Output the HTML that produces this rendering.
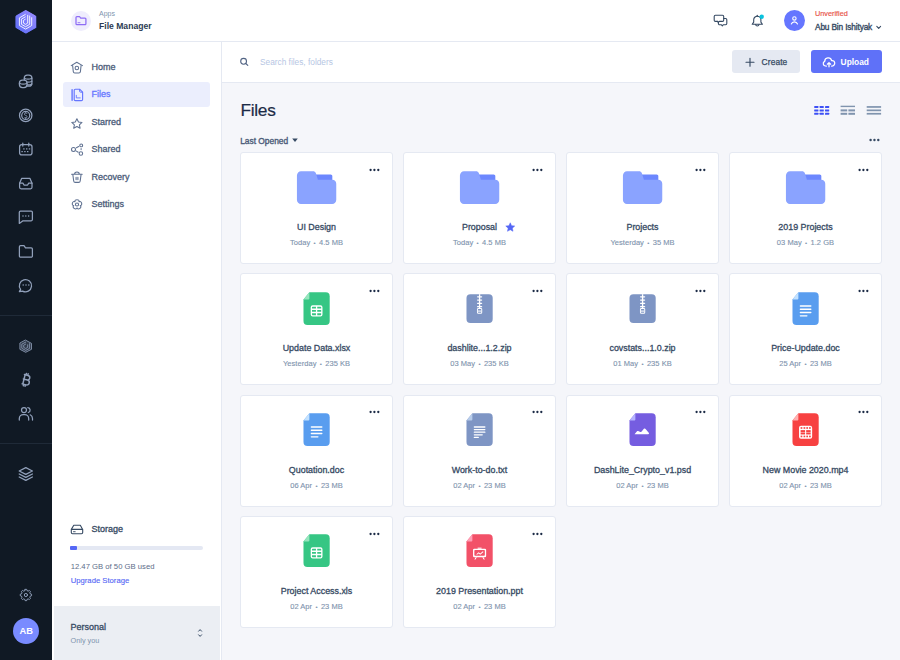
<!DOCTYPE html>
<html><head><meta charset="utf-8">
<style>
*{box-sizing:border-box;margin:0;padding:0}
html,body{width:900px;height:660px;overflow:hidden}
body{position:relative;background:#f5f6fa;font-family:"Liberation Sans",sans-serif;color:#526484}
.a{position:absolute;white-space:nowrap}
.dark{position:absolute;left:0;top:0;width:52px;height:660px;background:#101924}
.dark .hr{position:absolute;left:0;width:52px;height:1px;background:#1f2a38}
.ico{position:absolute;left:19px;width:14px;height:14px}
.ico svg{display:block;width:14px;height:14px}
.hdr{position:absolute;left:52px;top:0;width:848px;height:42px;background:#fff;border-bottom:1px solid #e5e9f2}
.aside{position:absolute;left:52px;top:42px;width:170px;height:618px;background:#fff;border-right:1px solid #e5e9f2}
.sbar{position:absolute;left:222px;top:42px;width:678px;height:41px;background:#fff;border-bottom:1px solid #e5e9f2}
.nav{font-size:9px;color:#364a63;line-height:10px;-webkit-text-stroke:0.3px currentColor}
.card{position:absolute;width:153px;height:112px;background:#fff;border:1px solid #e5e9f2;border-radius:3px}
.card svg.fi{position:absolute;left:51.6px;top:10.6px;width:47.2px;height:47.2px}
.card .dots{position:absolute;left:127.5px;top:15.2px;width:12px;height:4px}
.card .t{position:absolute;left:0;width:151px;top:68.5px;text-align:center;font-size:8.9px;color:#364a63;line-height:10px;-webkit-text-stroke:0.3px #364a63}
.card .m{position:absolute;left:0;width:151px;top:84.9px;text-align:center;font-size:7.5px;color:#8094ae;line-height:9px;letter-spacing:0.05px;-webkit-text-stroke:0.12px #8094ae}
.card .m b{font-weight:normal;font-size:6px;margin:0 3.3px;position:relative;top:-0.3px}
</style></head>
<body>
<!-- dark sidebar -->
<div class="dark">
  <svg style="position:absolute;left:15px;top:9.5px" width="22" height="24" viewBox="0 0 22 24">
    <polygon points="11,0.5 21.3,6.3 21.3,17.8 11,23.5 0.7,17.8 0.7,6.3" fill="#6576ff"/>
  </svg>
  <div class="hr" style="top:315px"></div>
  <div class="hr" style="top:443px"></div>
  <div style="position:absolute;left:13px;top:618px;width:26.4px;height:26.4px;border-radius:50%;background:#798bff;color:#fff;font-weight:bold;font-size:9.3px;line-height:26.4px;text-align:center">AB</div>
</div>

<!-- header -->
<div class="hdr"></div>
<div class="a" style="left:70.5px;top:10.5px;width:20.5px;height:20.5px;border-radius:50%;background:#efedfd"></div>
<div class="a" style="left:99px;top:9px;font-size:7px;line-height:9px;color:#8094ae">Apps</div>
<div class="a" style="left:99px;top:20.5px;font-size:8.6px;line-height:11px;font-weight:bold;color:#2b3b53">File Manager</div>

<div class="a" style="left:784px;top:10.4px;width:21px;height:21px;border-radius:50%;background:#6576ff"></div>
<div class="a" style="left:815px;top:9px;font-size:7.3px;line-height:9px;color:#e85347;-webkit-text-stroke:0.15px #e85347">Unverified</div>
<div class="a" style="left:815px;top:22px;font-size:8.3px;line-height:11px;color:#364a63;letter-spacing:-0.15px;-webkit-text-stroke:0.35px #364a63">Abu Bin Ishityak</div>

<!-- aside -->
<div class="aside"></div>
<div class="a" style="left:63.4px;top:82px;width:147px;height:25px;background:#ebeefd;border-radius:3px"></div>
<div class="a nav" style="left:91.6px;top:61.7px;color:#4a5b78">Home</div>
<div class="a nav" style="left:91.6px;top:89.2px;color:#6576ff">Files</div>
<div class="a nav" style="left:91.6px;top:116.8px;color:#4a5b78">Starred</div>
<div class="a nav" style="left:91.6px;top:144.3px;color:#4a5b78">Shared</div>
<div class="a nav" style="left:91.6px;top:171.9px;color:#4a5b78">Recovery</div>
<div class="a nav" style="left:91.6px;top:199.4px;color:#4a5b78">Settings</div>

<div class="a nav" style="left:91.6px;top:524.4px">Storage</div>
<div class="a" style="left:70.3px;top:546px;width:132.8px;height:4px;border-radius:2px;background:#e4e8f3"></div>
<div class="a" style="left:70.3px;top:546px;width:6.6px;height:4px;border-radius:1px;background:#5567f5"></div>
<div class="a" style="left:70.7px;top:561.5px;font-size:7.7px;line-height:9px;color:#5d6e8a">12.47 GB of 50 GB used</div>
<div class="a" style="left:70.7px;top:575.9px;font-size:7.7px;line-height:9px;color:#5567f5;-webkit-text-stroke:0.12px #5567f5">Upgrade Storage</div>

<div class="a" style="left:53.5px;top:605.7px;width:166.5px;height:54.3px;background:#ebeef3"></div>
<div class="a nav" style="left:70.6px;top:622px">Personal</div>
<div class="a" style="left:70.6px;top:636px;font-size:7.3px;line-height:9px;color:#8094ae">Only you</div>

<!-- search bar -->
<div class="sbar"></div>
<div class="a" style="left:260px;top:57.5px;font-size:8.3px;line-height:9px;color:#b6c6e3">Search files, folders</div>
<div class="a" style="left:732px;top:50.4px;width:68px;height:23px;border-radius:3px;background:#e5e9f2"></div>
<div class="a" style="left:761.6px;top:56.6px;font-size:8.4px;line-height:11px;color:#364a63;letter-spacing:0.1px;-webkit-text-stroke:0.25px #364a63">Create</div>
<div class="a" style="left:811px;top:50.4px;width:70.6px;height:23px;border-radius:3px;background:#5f71f8"></div>
<div class="a" style="left:840.6px;top:56.5px;font-size:8.4px;line-height:11px;font-weight:bold;color:#fff">Upload</div>

<!-- content -->
<div class="a" style="left:240.5px;top:99.5px;font-size:17.3px;line-height:20px;color:#1c2b46;letter-spacing:-0.3px;-webkit-text-stroke:0.2px #1c2b46">Files</div>
<div class="a" style="left:240.2px;top:135.9px;font-size:8.4px;line-height:10px;color:#4a5b78;-webkit-text-stroke:0.35px #4a5b78">Last Opened</div>


<!-- ICONS -->
<svg class="a" style="left:0;top:0" width="52" height="660" viewBox="0 0 52 660" fill="none" stroke="#91a0ba" stroke-width="1.25" stroke-linecap="round" stroke-linejoin="round">
  <!-- logo -->
  <defs><linearGradient id="lg" x1="0" y1="1" x2="1" y2="0"><stop offset="0" stop-color="#5a6cf6"/><stop offset="1" stop-color="#9d8dff"/></linearGradient></defs>
  <path d="M24.7,10.4 Q25.7,9.8 26.7,10.4 L35,15.2 Q35.9,15.7 35.9,16.8 V26.5 Q35.9,27.6 35,28.1 L26.7,32.9 Q25.7,33.5 24.7,32.9 L16.5,28.1 Q15.6,27.6 15.6,26.5 V16.8 Q15.6,15.7 16.5,15.2 Z" fill="url(#lg)" stroke="none"/>
  <g stroke="#fff" stroke-width="0.9" stroke-linecap="butt">
    <path d="M25.6,14.3 L19.4,17.9 V25.5 L25.6,29.1 L31.7,25.5 V17.3"/>
    <path d="M25.6,16.7 L21.4,19.1 V24.3 L25.6,26.7 L29.7,24.3 V15.6"/>
    <path d="M25.6,19.1 L23.4,20.4 V23.1 L25.6,24.4 L27.7,23.1 V14.9"/>
  </g>
  <!-- coins 81 -->
  <rect x="24.3" y="75" width="7.6" height="11.2" rx="3"/>
  <path d="M24.3,78.2 Q28.1,80.2 31.9,78.2 M24.6,81.2 Q28.1,83.2 31.9,81.2 M24.6,84 Q28.1,86 31.9,84"/>
  <rect x="19.4" y="80.2" width="7.6" height="7.4" rx="3" fill="#101924"/>
  <path d="M19.4,83.2 Q23.2,85.2 27,83.2"/>
  <!-- dollar coin 115.4 -->
  <circle cx="25.7" cy="115.4" r="6.2"/>
  <circle cx="25.7" cy="115.4" r="4"/>
  <path d="M27,113.6 Q26.6,112.9 25.7,112.9 Q24.4,112.9 24.4,114.2 Q24.4,115.2 25.7,115.4 Q27,115.6 27,116.6 Q27,117.9 25.7,117.9 Q24.8,117.9 24.4,117.2 M25.7,112 V112.9 M25.7,117.9 V118.8" stroke-width="0.8"/>
  <!-- calendar 149 -->
  <rect x="19.6" y="144.6" width="12.4" height="10.3" rx="2.2"/>
  <path d="M22.8,143.2 V146 M28.8,143.2 V146"/>
  <g fill="#91a0ba" stroke="none"><rect x="23.2" y="148.3" width="1.4" height="1.2"/><rect x="26" y="148.3" width="1.4" height="1.2"/><rect x="28.8" y="148.3" width="1.4" height="1.2"/><rect x="21.4" y="151" width="1.4" height="1.2"/><rect x="24.2" y="151" width="1.4" height="1.2"/><rect x="27" y="151" width="1.4" height="1.2"/></g>
  <!-- inbox 183.5 -->
  <path d="M19.6,183.2 L21.6,178.4 H30 L32,183.2 V187.3 A1.5,1.5 0 0 1 30.5,188.8 H21.1 A1.5,1.5 0 0 1 19.6,187.3 Z"/>
  <path d="M19.6,183.2 H22.9 L24,185 H27.6 L28.7,183.2 H32"/>
  <!-- chat square 217 -->
  <path d="M20.3,211 H31.2 A1.2,1.2 0 0 1 32.4,212.2 V219.6 A1.2,1.2 0 0 1 31.2,220.8 H23 L19.3,223.4 V212.2 A1.2,1.2 0 0 1 20.5,211 Z"/>
  <g fill="#91a0ba" stroke="none"><circle cx="23" cy="216" r="0.75"/><circle cx="25.8" cy="216" r="0.75"/><circle cx="28.6" cy="216" r="0.75"/></g>
  <!-- folder 251.4 -->
  <path d="M19.4,246.8 A1.2,1.2 0 0 1 20.6,245.6 H24 L25.5,247.8 H31.2 A1.2,1.2 0 0 1 32.4,249 V256 A1.2,1.2 0 0 1 31.2,257.2 H20.6 A1.2,1.2 0 0 1 19.4,256 Z"/>
  <!-- chat circle 285.3 -->
  <path d="M20.6,289.4 A6.1,6.1 0 1 1 22.6,291.1 L19.4,291.6 Z"/>
  <g fill="#91a0ba" stroke="none"><circle cx="23.2" cy="285" r="0.75"/><circle cx="26" cy="285" r="0.75"/><circle cx="28.8" cy="285" r="0.75"/></g>
  <!-- dashlite 346 -->
  <path d="M25.7,340 L31.6,343.3 V349.4 L25.7,352.5 L19.8,349.4 V343.3 Z" fill="#91a0ba" stroke="none" opacity="0.25"/>
  <g stroke-width="0.8">
    <path d="M25.7,340.2 L31.5,343.4 V349.3 L25.7,352.3 L19.9,349.3 V343.4 Z"/>
    <path d="M29.6,343.6 V348.4 L25.7,350.4 L21.8,348.3 V344.2 L25.7,342.1"/>
    <path d="M27.7,344.8 V347.4 L25.7,348.5 L23.7,347.4 V345.2 L25.7,344.1"/>
  </g>
  <!-- bitcoin 380 -->
  <path transform="rotate(14 25.7 379.8)" d="M23.2,375 H26.9 A2.3,2.3 0 0 1 26.9,379.6 H23.2 M23.2,379.6 H27.4 A2.5,2.5 0 0 1 27.4,384.6 H23.2 M23.9,375 V384.6 M24.8,373.4 V375 M26.6,373.4 V375 M24.8,384.6 V386.2 M26.6,384.6 V386.2" stroke-width="1.45"/>
  <!-- users 413.6 -->
  <circle cx="24" cy="410" r="2.5"/>
  <path d="M19.3,420 V418.6 A4,4 0 0 1 23.3,414.6 H24.7 A4,4 0 0 1 28.7,418.6 V420"/>
  <path d="M27.8,407.6 A2.5,2.5 0 0 1 28.3,412.5 M30.2,414.8 A4,4 0 0 1 32.5,418.4 V420"/>
  <!-- layers 474 -->
  <path d="M25.8,467.6 L32.4,471 L25.8,474.4 L19.2,471 Z"/>
  <path d="M19.2,474 L25.8,477.4 L32.4,474 M19.2,477 L25.8,480.4 L32.4,477"/>
  <!-- gear 595 -->
  <path d="M25.14,589.35 L26.66,589.35 L27.05,590.65 L28.16,591.11 L29.36,590.47 L30.43,591.54 L29.79,592.74 L30.25,593.85 L31.55,594.24 L31.55,595.76 L30.25,596.15 L29.79,597.26 L30.43,598.46 L29.36,599.53 L28.16,598.89 L27.05,599.35 L26.66,600.65 L25.14,600.65 L24.75,599.35 L23.64,598.89 L22.44,599.53 L21.37,598.46 L22.01,597.26 L21.55,596.15 L20.25,595.76 L20.25,594.24 L21.55,593.85 L22.01,592.74 L21.37,591.54 L22.44,590.47 L23.64,591.11 L24.75,590.65Z" stroke-width="1"/>
  <circle cx="25.9" cy="595" r="1.6" stroke-width="1"/>
</svg>

<!-- header icons -->
<svg class="a" style="left:52px;top:0" width="848" height="42" viewBox="52 0 848 42" fill="none" stroke="#364a63" stroke-width="1.1" stroke-linecap="round" stroke-linejoin="round">
  <path d="M76,17.4 A0.9,0.9 0 0 1 76.9,16.5 H79.5 L80.7,18.2 H85 A0.9,0.9 0 0 1 85.9,19.1 V23.8 A0.9,0.9 0 0 1 85,24.7 H76.9 A0.9,0.9 0 0 1 76,23.8 Z" stroke="#8e6df5" stroke-width="1.25"/>
  <path d="M78,22.7 H80" stroke="#8e6df5" stroke-width="0.9"/>
  <!-- chat -->
  <path d="M717.4,21.4 H715.4 A1.2,1.2 0 0 1 714.2,20.2 V16.4 A1.2,1.2 0 0 1 715.4,15.2 H722.5 A1.2,1.2 0 0 1 723.7,16.4 V20.2 A1.2,1.2 0 0 1 722.5,21.4 H719.6 A1.2,1.2 0 0 0 718.4,22.6 M717.4,21.4 L718.4,22.6"/>
  <path d="M723.8,18.5 H725.6 A1.2,1.2 0 0 1 726.8,19.7 V23.5 A1.2,1.2 0 0 1 725.6,24.7 H723.4 L722.3,25.8 L721.2,24.7 H719.6 A1.2,1.2 0 0 1 718.4,23.5 V22.6"/>
  <!-- bell -->
  <path d="M752.2,24.2 L753.7,22.1 V19.8 A3.6,3.6 0 0 1 760.9,19.8 V22.1 L762.4,24.2 Z"/>
  <path d="M755.6,24.6 A1.75,1.75 0 0 0 759,24.6"/>
  <path d="M757.3,15.2 V16.2" stroke-width="1.1"/>
  <circle cx="761.7" cy="16.7" r="2.2" fill="#09c2de" stroke="none"/>
  <!-- user -->
  <circle cx="794.4" cy="18.4" r="1.7" stroke="#fff" stroke-width="1.1"/>
  <path d="M791.3,24 A3.3,3.3 0 0 1 797.5,24" stroke="#fff" stroke-width="1.1"/>
  <!-- chevron -->
  <path d="M876.8,26.4 L878.7,28.3 L880.6,26.4" stroke-width="1.1"/>
</svg>

<!-- aside nav icons -->
<svg class="a" style="left:52px;top:42px" width="170" height="618" viewBox="52 42 170 618" fill="none" stroke="#5f7191" stroke-width="1.05" stroke-linecap="round" stroke-linejoin="round">
  <path d="M71.2,65.6 L76.8,62.3 L82.5,65.6"/>
  <path d="M72.6,65.4 L73.3,71.6 A1.5,1.5 0 0 0 74.8,72.9 H78.9 A1.5,1.5 0 0 0 80.4,71.6 L81.1,65.4"/>
  <circle cx="76.85" cy="67.9" r="1.75"/>
  <g stroke="#6576ff">
    <path d="M72.1,89.8 V100.2" stroke-width="1.4"/>
    <path d="M75.4,89.2 H79.6 L82.6,92.2 V99.4 A1.2,1.2 0 0 1 81.4,100.6 H75.4 A1.2,1.2 0 0 1 74.2,99.4 V90.4 A1.2,1.2 0 0 1 75.4,89.2 Z" stroke-width="1.15"/>
    <path d="M79.6,89.4 V91.2 A1,1 0 0 0 80.6,92.2 H82.4" stroke-width="1"/>
    <path d="M76.3,95.3 V97.9 H80.2" stroke-width="0.9"/>
  </g>
  <path d="M76.9,118.8 L78.5,122 L82,122.4 L79.4,124.8 L80.1,128.2 L76.9,126.5 L73.7,128.2 L74.4,124.8 L71.8,122.4 L75.3,122 Z"/>
  <circle cx="73.5" cy="149.4" r="2"/>
  <circle cx="81.2" cy="145.4" r="1.45"/>
  <circle cx="80.9" cy="153.5" r="1.75"/>
  <path d="M76.4,147.7 L78.6,146.5 M76.4,151.1 L78.2,152.2 M81.1,148.4 V149.6"/>
  <path d="M71.6,174.3 H82.2 M72.8,174.3 L73.7,181 A1.6,1.6 0 0 0 75.3,182.4 H78.6 A1.6,1.6 0 0 0 80.2,181 L81.1,174.3 M74.6,174.2 A2.35,2.2 0 0 1 79.3,174.2 M76.1,177.4 V179.6 M77.9,177.4 V179.6" stroke-width="1.1"/>
  <path d="M75.00,201.75 C74.10,199.00 79.90,199.00 79.00,201.75 C81.33,200.04 83.13,205.56 80.23,205.55 C82.58,207.25 77.89,210.65 77.00,207.90 C76.11,210.65 71.42,207.25 73.77,205.55 C70.87,205.56 72.67,200.04 75.00,201.75 Z"/>
  <circle cx="77" cy="204.5" r="1.6"/>
  <!-- storage drive -->
  <path d="M71.3,529.4 L73.8,525.2 H80.3 L82.7,529.4 V532.6 A1.2,1.2 0 0 1 81.5,533.8 H72.5 A1.2,1.2 0 0 1 71.3,532.6 Z M71.3,529.4 H82.7" stroke="#364a63" stroke-width="1.1"/>
  <path d="M73.5,531.7 H75.2" stroke="#364a63" stroke-width="0.9"/>
  <!-- up-down chevrons -->
  <path d="M198.6,631.2 L200.1,629.6 L201.6,631.2 M198.6,634.8 L200.1,636.4 L201.6,634.8" stroke="#364a63" stroke-width="1"/>
</svg>

<!-- search bar icons -->
<svg class="a" style="left:222px;top:42px" width="678" height="41" viewBox="222 42 678 41" fill="none" stroke="#364a63" stroke-width="1.2" stroke-linecap="round" stroke-linejoin="round">
  <circle cx="243.6" cy="61.3" r="2.9" stroke="#526484" stroke-width="1.1"/>
  <path d="M245.8,63.5 L247.8,65.4" stroke="#526484" stroke-width="1.1"/>
  <path d="M750,58.3 V66.2 M746,62.25 H754" stroke-width="1.15"/>
</svg>


<!-- content icons -->
<svg class="a" style="left:222px;top:83px" width="678" height="70" viewBox="222 83 678 70" fill="none" stroke-linecap="round" stroke-linejoin="round">
  <path d="M292.2,138.5 H297.8 L295,141.9 Z" fill="#364a63"/>
  <g fill="#3d50f5">
    <rect x="814.2" y="106" width="4.2" height="2" rx="0.4"/><rect x="819.6" y="106" width="4.2" height="2" rx="0.4"/><rect x="825" y="106" width="4.2" height="2" rx="0.4"/>
    <rect x="814.2" y="109.4" width="4.2" height="2" rx="0.4"/><rect x="819.6" y="109.4" width="4.2" height="2" rx="0.4"/><rect x="825" y="109.4" width="4.2" height="2" rx="0.4"/>
    <rect x="814.2" y="112.8" width="4.2" height="2" rx="0.4"/><rect x="819.6" y="112.8" width="4.2" height="2" rx="0.4"/><rect x="825" y="112.8" width="4.2" height="2" rx="0.4"/>
  </g>
  <g fill="#8094ae">
    <rect x="840.6" y="105.7" width="14.4" height="1.4"/>
    <rect x="840.6" y="109.4" width="6.6" height="2"/><rect x="848.4" y="109.4" width="6.6" height="2"/>
    <rect x="840.6" y="112.8" width="6.6" height="2"/><rect x="848.4" y="112.8" width="6.6" height="2"/>
    <rect x="866.7" y="106.1" width="14.4" height="1.7"/>
    <rect x="866.7" y="109.5" width="14.4" height="1.7"/>
    <rect x="866.7" y="112.9" width="14.4" height="1.7"/>
  </g>
  <g fill="#364a63"><circle cx="870.6" cy="140" r="1.2"/><circle cx="874.45" cy="140" r="1.2"/><circle cx="878.3" cy="140" r="1.2"/></g>
</svg>
<svg class="a" style="left:811px;top:50px" width="71" height="24" viewBox="811 50 71 24" fill="none" stroke="#fff" stroke-width="1.25" stroke-linecap="round" stroke-linejoin="round">
  <path d="M826.4,66 H825.6 A2.4,2.4 0 0 1 824.7,61.4 A3.5,3.5 0 0 1 831.6,60.6 A2.5,2.5 0 0 1 832.4,66 H831.6"/>
  <path d="M829,66.8 V62.6 M827.4,64.2 L829,62.6 L830.6,64.2"/>
</svg>

<div id="cards">
<div class="card" style="left:240.0px;top:152.0px"><div style="position:absolute;left:0;top:0px;width:100%;height:100%"><svg class="dots" viewBox="0 0 12 4"><circle cx="1.6" cy="2" r="1.15" fill="#1c2b46"/><circle cx="5.4" cy="2" r="1.15" fill="#1c2b46"/><circle cx="9.3" cy="2" r="1.15" fill="#1c2b46"/></svg><svg class="fi" viewBox="0 0 72 72"><path fill="#6c87fe" d="M57.5,31h-23c-1.4,0-2.5-1.1-2.5-2.5v-10c0-1.4,1.1-2.5,2.5-2.5h23c1.4,0,2.5,1.1,2.5,2.5v10C60,29.9,58.9,31,57.5,31z"/><path fill="#8aa3ff" d="M59.8,61H12.2C8.8,61,6,58,6,54.4V17.6C6,14,8.8,11,12.2,11h18.5c1.7,0,3.3,1,4.1,2.6L38,24h21.8c3.4,0,6.2,2.4,6.2,6v24.4C66,58,63.2,61,59.8,61z"/></svg></div><div class="t">UI Design</div><div class="m">Today<b>&bull;</b>4.5 MB</div></div>
<div class="card" style="left:403.0px;top:152.0px"><div style="position:absolute;left:0;top:0px;width:100%;height:100%"><svg class="dots" viewBox="0 0 12 4"><circle cx="1.6" cy="2" r="1.15" fill="#1c2b46"/><circle cx="5.4" cy="2" r="1.15" fill="#1c2b46"/><circle cx="9.3" cy="2" r="1.15" fill="#1c2b46"/></svg><svg class="fi" viewBox="0 0 72 72"><path fill="#6c87fe" d="M57.5,31h-23c-1.4,0-2.5-1.1-2.5-2.5v-10c0-1.4,1.1-2.5,2.5-2.5h23c1.4,0,2.5,1.1,2.5,2.5v10C60,29.9,58.9,31,57.5,31z"/><path fill="#8aa3ff" d="M59.8,61H12.2C8.8,61,6,58,6,54.4V17.6C6,14,8.8,11,12.2,11h18.5c1.7,0,3.3,1,4.1,2.6L38,24h21.8c3.4,0,6.2,2.4,6.2,6v24.4C66,58,63.2,61,59.8,61z"/></svg></div><div class="t">Proposal</div><svg viewBox="0 0 24 24" style="position:absolute;left:101px;top:69px;width:10.5px;height:10.5px"><path fill="#5567f5" stroke="#5567f5" stroke-width="1.2" stroke-linejoin="round" d="M12 1.8l3 6.6 7.2.8-5.4 4.9 1.5 7.1L12 17.6l-6.3 3.6 1.5-7.1-5.4-4.9 7.2-.8z"/></svg><div class="m">Today<b>&bull;</b>4.5 MB</div></div>
<div class="card" style="left:566.0px;top:152.0px"><div style="position:absolute;left:0;top:0px;width:100%;height:100%"><svg class="dots" viewBox="0 0 12 4"><circle cx="1.6" cy="2" r="1.15" fill="#1c2b46"/><circle cx="5.4" cy="2" r="1.15" fill="#1c2b46"/><circle cx="9.3" cy="2" r="1.15" fill="#1c2b46"/></svg><svg class="fi" viewBox="0 0 72 72"><path fill="#6c87fe" d="M57.5,31h-23c-1.4,0-2.5-1.1-2.5-2.5v-10c0-1.4,1.1-2.5,2.5-2.5h23c1.4,0,2.5,1.1,2.5,2.5v10C60,29.9,58.9,31,57.5,31z"/><path fill="#8aa3ff" d="M59.8,61H12.2C8.8,61,6,58,6,54.4V17.6C6,14,8.8,11,12.2,11h18.5c1.7,0,3.3,1,4.1,2.6L38,24h21.8c3.4,0,6.2,2.4,6.2,6v24.4C66,58,63.2,61,59.8,61z"/></svg></div><div class="t">Projects</div><div class="m">Yesterday<b>&bull;</b>35 MB</div></div>
<div class="card" style="left:729.0px;top:152.0px"><div style="position:absolute;left:0;top:0px;width:100%;height:100%"><svg class="dots" viewBox="0 0 12 4"><circle cx="1.6" cy="2" r="1.15" fill="#1c2b46"/><circle cx="5.4" cy="2" r="1.15" fill="#1c2b46"/><circle cx="9.3" cy="2" r="1.15" fill="#1c2b46"/></svg><svg class="fi" viewBox="0 0 72 72"><path fill="#6c87fe" d="M57.5,31h-23c-1.4,0-2.5-1.1-2.5-2.5v-10c0-1.4,1.1-2.5,2.5-2.5h23c1.4,0,2.5,1.1,2.5,2.5v10C60,29.9,58.9,31,57.5,31z"/><path fill="#8aa3ff" d="M59.8,61H12.2C8.8,61,6,58,6,54.4V17.6C6,14,8.8,11,12.2,11h18.5c1.7,0,3.3,1,4.1,2.6L38,24h21.8c3.4,0,6.2,2.4,6.2,6v24.4C66,58,63.2,61,59.8,61z"/></svg></div><div class="t">2019 Projects</div><div class="m">03 May<b>&bull;</b>1.2 GB</div></div>
<div class="card" style="left:240.0px;top:273.0px"><div style="position:absolute;left:0;top:0px;width:100%;height:100%"><svg class="dots" viewBox="0 0 12 4"><circle cx="1.6" cy="2" r="1.15" fill="#1c2b46"/><circle cx="5.4" cy="2" r="1.15" fill="#1c2b46"/><circle cx="9.3" cy="2" r="1.15" fill="#1c2b46"/></svg><svg class="fi" viewBox="0 0 72 72"><path d="M50,61H22a6,6,0,0,1-6-6V22l9-11H50a6,6,0,0,1,6,6V55A6,6,0,0,1,50,61Z" fill="#36c684"/><path d="M25,20.556A1.444,1.444,0,0,1,23.556,22H16l9-11h0Z" fill="#95e5bd"/><path fill="#fff" d="M42,31H30a3,3,0,0,0-3,3V45a3,3,0,0,0,3,3H42a3,3,0,0,0,3-3V34A3,3,0,0,0,42,31ZM29,38h6v3H29Zm8,0h6v3H37Zm6-4v2H37V33h5A1,1,0,0,1,43,34ZM30,33h5v3H29V34A1,1,0,0,1,30,33ZM29,45V43h6v3H30A1,1,0,0,1,29,45Zm13,1H37V43h6v2A1,1,0,0,1,42,46Z"/></svg></div><div class="t">Update Data.xlsx</div><div class="m">Yesterday<b>&bull;</b>235 KB</div></div>
<div class="card" style="left:403.0px;top:273.0px"><div style="position:absolute;left:0;top:0px;width:100%;height:100%"><svg class="dots" viewBox="0 0 12 4"><circle cx="1.6" cy="2" r="1.15" fill="#1c2b46"/><circle cx="5.4" cy="2" r="1.15" fill="#1c2b46"/><circle cx="9.3" cy="2" r="1.15" fill="#1c2b46"/></svg><svg class="fi" viewBox="0 0 72 72"><rect x="16" y="14" width="40" height="44" rx="6" ry="6" fill="#7e95c4"/><rect x="32" y="17" width="8" height="2" rx="1" fill="#fff"/><rect x="32" y="22" width="8" height="2" rx="1" fill="#fff"/><rect x="32" y="27" width="8" height="2" rx="1" fill="#fff"/><rect x="32" y="32" width="8" height="2" rx="1" fill="#fff"/><rect x="35" y="14" width="2" height="22" fill="#fff"/><path fill="#fff" d="M38,44H34a2,2,0,0,1-2-2V37a2,2,0,0,1,2-2h4a2,2,0,0,1,2,2v5A2,2,0,0,1,38,44Zm-4-7.2a.6.6,0,0,0-.6.6v4.2a.6.6,0,0,0,.6.6h4a.6.6,0,0,0,.6-.6V37.4a.6.6,0,0,0-.6-.6Z"/><rect x="33" y="39" width="6" height="1.6" fill="#fff"/></svg></div><div class="t">dashlite...1.2.zip</div><div class="m">03 May<b>&bull;</b>235 KB</div></div>
<div class="card" style="left:566.0px;top:273.0px"><div style="position:absolute;left:0;top:0px;width:100%;height:100%"><svg class="dots" viewBox="0 0 12 4"><circle cx="1.6" cy="2" r="1.15" fill="#1c2b46"/><circle cx="5.4" cy="2" r="1.15" fill="#1c2b46"/><circle cx="9.3" cy="2" r="1.15" fill="#1c2b46"/></svg><svg class="fi" viewBox="0 0 72 72"><rect x="16" y="14" width="40" height="44" rx="6" ry="6" fill="#7e95c4"/><rect x="32" y="17" width="8" height="2" rx="1" fill="#fff"/><rect x="32" y="22" width="8" height="2" rx="1" fill="#fff"/><rect x="32" y="27" width="8" height="2" rx="1" fill="#fff"/><rect x="32" y="32" width="8" height="2" rx="1" fill="#fff"/><rect x="35" y="14" width="2" height="22" fill="#fff"/><path fill="#fff" d="M38,44H34a2,2,0,0,1-2-2V37a2,2,0,0,1,2-2h4a2,2,0,0,1,2,2v5A2,2,0,0,1,38,44Zm-4-7.2a.6.6,0,0,0-.6.6v4.2a.6.6,0,0,0,.6.6h4a.6.6,0,0,0,.6-.6V37.4a.6.6,0,0,0-.6-.6Z"/><rect x="33" y="39" width="6" height="1.6" fill="#fff"/></svg></div><div class="t">covstats...1.0.zip</div><div class="m">01 May<b>&bull;</b>235 KB</div></div>
<div class="card" style="left:729.0px;top:273.0px"><div style="position:absolute;left:0;top:0px;width:100%;height:100%"><svg class="dots" viewBox="0 0 12 4"><circle cx="1.6" cy="2" r="1.15" fill="#1c2b46"/><circle cx="5.4" cy="2" r="1.15" fill="#1c2b46"/><circle cx="9.3" cy="2" r="1.15" fill="#1c2b46"/></svg><svg class="fi" viewBox="0 0 72 72"><path d="M50,61H22a6,6,0,0,1-6-6V22l9-11H50a6,6,0,0,1,6,6V55A6,6,0,0,1,50,61Z" fill="#599def"/><path d="M25,20.556A1.444,1.444,0,0,1,23.556,22H16l9-11h0Z" fill="#c2e1ff"/><rect x="27" y="31" width="18" height="2" rx="1" fill="#fff"/><rect x="27" y="36" width="18" height="2" rx="1" fill="#fff"/><rect x="27" y="41" width="18" height="2" rx="1" fill="#fff"/><rect x="27" y="46" width="12" height="2" rx="1" fill="#fff"/></svg></div><div class="t">Price-Update.doc</div><div class="m">25 Apr<b>&bull;</b>23 MB</div></div>
<div class="card" style="left:240.0px;top:395.0px"><div style="position:absolute;left:0;top:-0.8px;width:100%;height:100%"><svg class="dots" viewBox="0 0 12 4"><circle cx="1.6" cy="2" r="1.15" fill="#1c2b46"/><circle cx="5.4" cy="2" r="1.15" fill="#1c2b46"/><circle cx="9.3" cy="2" r="1.15" fill="#1c2b46"/></svg><svg class="fi" viewBox="0 0 72 72"><path d="M50,61H22a6,6,0,0,1-6-6V22l9-11H50a6,6,0,0,1,6,6V55A6,6,0,0,1,50,61Z" fill="#599def"/><path d="M25,20.556A1.444,1.444,0,0,1,23.556,22H16l9-11h0Z" fill="#c2e1ff"/><rect x="27" y="31" width="18" height="2" rx="1" fill="#fff"/><rect x="27" y="36" width="18" height="2" rx="1" fill="#fff"/><rect x="27" y="41" width="18" height="2" rx="1" fill="#fff"/><rect x="27" y="46" width="12" height="2" rx="1" fill="#fff"/></svg></div><div class="t">Quotation.doc</div><div class="m">06 Apr<b>&bull;</b>23 MB</div></div>
<div class="card" style="left:403.0px;top:395.0px"><div style="position:absolute;left:0;top:-0.8px;width:100%;height:100%"><svg class="dots" viewBox="0 0 12 4"><circle cx="1.6" cy="2" r="1.15" fill="#1c2b46"/><circle cx="5.4" cy="2" r="1.15" fill="#1c2b46"/><circle cx="9.3" cy="2" r="1.15" fill="#1c2b46"/></svg><svg class="fi" viewBox="0 0 72 72"><path d="M50,61H22a6,6,0,0,1-6-6V22l9-11H50a6,6,0,0,1,6,6V55A6,6,0,0,1,50,61Z" fill="#7e95c4"/><path d="M25,20.556A1.444,1.444,0,0,1,23.556,22H16l9-11h0Z" fill="#b7ccea"/><rect x="27" y="31" width="18" height="2" rx="1" fill="#fff"/><rect x="27" y="35" width="18" height="2" rx="1" fill="#fff"/><rect x="27" y="39" width="18" height="2" rx="1" fill="#fff"/><rect x="27" y="43" width="14" height="2" rx="1" fill="#fff"/><rect x="27" y="47" width="8" height="2" rx="1" fill="#fff"/></svg></div><div class="t">Work-to-do.txt</div><div class="m">02 Apr<b>&bull;</b>23 MB</div></div>
<div class="card" style="left:566.0px;top:395.0px"><div style="position:absolute;left:0;top:-0.8px;width:100%;height:100%"><svg class="dots" viewBox="0 0 12 4"><circle cx="1.6" cy="2" r="1.15" fill="#1c2b46"/><circle cx="5.4" cy="2" r="1.15" fill="#1c2b46"/><circle cx="9.3" cy="2" r="1.15" fill="#1c2b46"/></svg><svg class="fi" viewBox="0 0 72 72"><path d="M50,61H22a6,6,0,0,1-6-6V22l9-11H50a6,6,0,0,1,6,6V55A6,6,0,0,1,50,61Z" fill="#755de0"/><path d="M25,20.556A1.444,1.444,0,0,1,23.556,22H16l9-11h0Z" fill="#b5b3ff"/><path fill="#fff" d="M27.2,43H44.7s2.3-.3.7-2l-5.2-6.1s-1.4-1.5-2.5.1l-3.5,4.1a2.1,2.1,0,0,1-2.4.2l-2.6-1.2s-1-.4-1.7.4l-3.5,4.1-.1.4c-.5.4,.4,0,.3,0Z"/></svg></div><div class="t">DashLite_Crypto_v1.psd</div><div class="m">02 Apr<b>&bull;</b>23 MB</div></div>
<div class="card" style="left:729.0px;top:395.0px"><div style="position:absolute;left:0;top:-0.8px;width:100%;height:100%"><svg class="dots" viewBox="0 0 12 4"><circle cx="1.6" cy="2" r="1.15" fill="#1c2b46"/><circle cx="5.4" cy="2" r="1.15" fill="#1c2b46"/><circle cx="9.3" cy="2" r="1.15" fill="#1c2b46"/></svg><svg class="fi" viewBox="0 0 72 72"><path d="M50,61H22a6,6,0,0,1-6-6V22l9-11H50a6,6,0,0,1,6,6V55A6,6,0,0,1,50,61Z" fill="#f74141"/><path d="M25,20.556A1.444,1.444,0,0,1,23.556,22H16l9-11h0Z" fill="#ffb0b0"/><rect x="26" y="30" width="20" height="20" rx="3" fill="#fff"/><g fill="#f74141"><rect x="28.4" y="32.3" width="2.6" height="2.5"/><rect x="32.9" y="32.3" width="2.6" height="2.5"/><rect x="37.1" y="32.3" width="2.6" height="2.5"/><rect x="41.3" y="32.3" width="2.6" height="2.5"/><rect x="28.4" y="45.2" width="2.6" height="2.5"/><rect x="32.9" y="45.2" width="2.6" height="2.5"/><rect x="37.1" y="45.2" width="2.6" height="2.5"/><rect x="41.3" y="45.2" width="2.6" height="2.5"/><rect x="28.4" y="36.8" width="6.8" height="3"/><rect x="28.4" y="40.4" width="6.8" height="3"/><rect x="36.9" y="36.8" width="6.8" height="3"/><rect x="36.9" y="40.4" width="6.8" height="3"/></g></svg></div><div class="t">New Movie 2020.mp4</div><div class="m">02 Apr<b>&bull;</b>23 MB</div></div>
<div class="card" style="left:240.0px;top:516.0px"><div style="position:absolute;left:0;top:-0.5px;width:100%;height:100%"><svg class="dots" viewBox="0 0 12 4"><circle cx="1.6" cy="2" r="1.15" fill="#1c2b46"/><circle cx="5.4" cy="2" r="1.15" fill="#1c2b46"/><circle cx="9.3" cy="2" r="1.15" fill="#1c2b46"/></svg><svg class="fi" viewBox="0 0 72 72"><path d="M50,61H22a6,6,0,0,1-6-6V22l9-11H50a6,6,0,0,1,6,6V55A6,6,0,0,1,50,61Z" fill="#36c684"/><path d="M25,20.556A1.444,1.444,0,0,1,23.556,22H16l9-11h0Z" fill="#95e5bd"/><path fill="#fff" d="M42,31H30a3,3,0,0,0-3,3V45a3,3,0,0,0,3,3H42a3,3,0,0,0,3-3V34A3,3,0,0,0,42,31ZM29,38h6v3H29Zm8,0h6v3H37Zm6-4v2H37V33h5A1,1,0,0,1,43,34ZM30,33h5v3H29V34A1,1,0,0,1,30,33ZM29,45V43h6v3H30A1,1,0,0,1,29,45Zm13,1H37V43h6v2A1,1,0,0,1,42,46Z"/></svg></div><div class="t">Project Access.xls</div><div class="m">02 Apr<b>&bull;</b>23 MB</div></div>
<div class="card" style="left:403.0px;top:516.0px"><div style="position:absolute;left:0;top:-0.5px;width:100%;height:100%"><svg class="dots" viewBox="0 0 12 4"><circle cx="1.6" cy="2" r="1.15" fill="#1c2b46"/><circle cx="5.4" cy="2" r="1.15" fill="#1c2b46"/><circle cx="9.3" cy="2" r="1.15" fill="#1c2b46"/></svg><svg class="fi" viewBox="0 0 72 72"><path d="M50,61H22a6,6,0,0,1-6-6V22l9-11H50a6,6,0,0,1,6,6V55A6,6,0,0,1,50,61Z" fill="#f25168"/><path d="M25,20.556A1.444,1.444,0,0,1,23.556,22H16l9-11h0Z" fill="#ff9fb6"/><path fill="#fff" d="M44.1,46H27.9A1.9,1.9,0,0,1,26,44.1V34.9A1.9,1.9,0,0,1,27.9,33H44.1A1.9,1.9,0,0,1,46,34.9v9.2A1.9,1.9,0,0,1,44.1,46ZM29.1,44H42.9A1.1,1.1,0,0,0,44,42.9V36.1A1.1,1.1,0,0,0,42.9,35H29.1A1.1,1.1,0,0,0,28,36.1v6.8A1.1,1.1,0,0,0,29.1,44Z"/><path fill="#fff" d="M33,31.5h6v1.6h-6Z"/><path fill="#fff" d="M30,46l-2,3.5h1.8l2-3.5Zm12,0l2,3.5h-1.8l-2-3.5Z"/><path fill="#fff" d="M31,41.5l3.5-3,2.5,2,4-3.5 1,1-5,4.3-2.5-2-2.5,2.2Z"/></svg></div><div class="t">2019 Presentation.ppt</div><div class="m">02 Apr<b>&bull;</b>23 MB</div></div>
</div><!--/cards-->
</body></html>
